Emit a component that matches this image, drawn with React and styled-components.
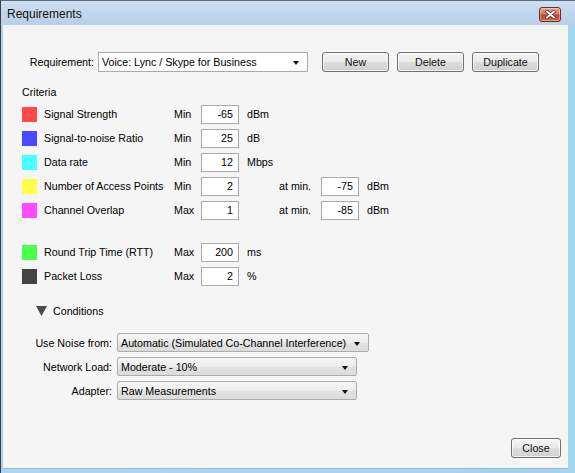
import React from 'react'
import styled, { createGlobalStyle } from 'styled-components'

const GlobalStyle = createGlobalStyle`
 html, body {
  margin: 0;
  padding: 0;
  background: #ffffff;
 }
 body {
  font-family: 'Liberation Sans', Arial, sans-serif;
  font-size: 10.7px;
  color: #000;
 }
`

const Frame = styled.div`
 width: 575px;
 height: 473px;
 box-sizing: border-box;
 display: flex;
 flex-direction: column;
 border-left: 1px solid #3a3f46;
 border-top: 1px solid #5a6b80;
 background: linear-gradient(to right, #b9d2ec 0%, #b2cde9 96%, #9fd8ef 100%);
 overflow: hidden;
`

const TitleBar = styled.div`
 height: 24px;
 flex: none;
 display: flex;
 align-items: center;
 justify-content: space-between;
 padding: 0 14px 0 6px;
 background: linear-gradient(to bottom, #cfe0f2 0%, #c2d7ee 45%, #b7cfea 100%);
`

const Title = styled.div`
 font-size: 12px;
 color: #111;
 padding-top: 2px;
`

const CloseBox = styled.div`
 width: 22px;
 height: 15px;
 margin-top: 3px;
 box-sizing: border-box;
 border: 1px solid #6b2b22;
 border-radius: 3px;
 display: flex;
 align-items: center;
 justify-content: center;
 background: linear-gradient(to bottom, #e8a493 0%, #d6775f 45%, #c3452b 55%, #cf6a4c 100%);
 box-shadow: inset 0 0 0 1px rgba(255, 255, 255, 0.35);
`

const Body = styled.div`
 flex: 1;
 display: flex;
 flex-direction: column;
 margin: 0 7px 4px 2px;
 padding-top: 27px;
 background: #f5f5f5;
 border-bottom: 1px solid #7fc6e4;
`

const RequirementRow = styled.div`
 display: flex;
 align-items: center;
 height: 20px;
`

const FieldLabel = styled.div`
 width: ${(p) => p.width}px;
 text-align: right;
 margin-right: ${(p) => p.gap}px;
 flex: none;
 white-space: nowrap;
`

const Combo = styled.div`
 position: relative;
 width: ${(p) => p.width}px;
 height: ${(p) => p.height}px;
 box-sizing: border-box;
 flex: none;
 padding-left: 3px;
 display: flex;
 align-items: center;
 border: 1px solid ${(p) => (p.flat ? '#a9a9a9' : '#acacac')};
 border-radius: ${(p) => (p.flat ? 0 : 2)}px;
 background: ${(p) =>
  p.flat ? '#ffffff' : 'linear-gradient(to bottom, #f6f6f6 0%, #ececec 50%, #e1e1e1 51%, #dcdcdc 100%)'};
 white-space: nowrap;

 &::after {
  content: '';
  position: absolute;
  right: 8px;
  top: 50%;
  margin-top: -1px;
  border-left: 3.5px solid transparent;
  border-right: 3.5px solid transparent;
  border-top: 4px solid #111;
 }
`

const ButtonGroup = styled.div`
 display: flex;
 gap: 8px;
 margin-left: 14px;
`

const Button = styled.div`
 width: ${(p) => p.width || 67}px;
 height: 20px;
 box-sizing: border-box;
 display: flex;
 align-items: center;
 justify-content: center;
 border: 1px solid #707070;
 border-radius: 3px;
 background: linear-gradient(to bottom, #f4f4f4 0%, #ebebeb 48%, #dddddd 52%, #cfcfcf 100%);
 box-shadow: inset 0 0 0 1px rgba(255, 255, 255, 0.7);
 color: #111;
`

const SectionTitle = styled.div`
 margin: 12px 0 0 19px;
 height: 16px;
 line-height: 16px;
`

const CriteriaList = styled.div`
 display: flex;
 flex-direction: column;
 margin-top: 2px;
 padding-left: 19px;
`

const CriteriaRow = styled.div`
 display: flex;
 align-items: center;
 height: 24px;
 margin-top: ${(p) => (p.spaced ? 18 : 0)}px;
`

const Swatch = styled.div`
 width: 15px;
 height: 15px;
 flex: none;
 background: ${(p) => p.color};
 margin-right: 7px;
`

const CriteriaName = styled.div`
 width: 130px;
 flex: none;
 white-space: nowrap;
`

const Mode = styled.div`
 width: 27px;
 flex: none;
`

const ValueBox = styled.div`
 width: 38px;
 height: 19px;
 box-sizing: border-box;
 flex: none;
 border: 1px solid #a9a9a9;
 background: #fff;
 display: flex;
 align-items: center;
 justify-content: flex-end;
 padding-right: 5px;
`

const Unit = styled.div`
 width: ${(p) => p.width || 32}px;
 padding-left: 8px;
 flex: none;
`

const AtMin = styled.div`
 width: 42px;
 flex: none;
`

const ConditionsHeader = styled.div`
 display: flex;
 align-items: center;
 height: 20px;
 margin: 13px 0 0 33px;
 gap: 6px;
`

const ConditionsList = styled.div`
 display: flex;
 flex-direction: column;
 gap: 5px;
 margin-top: 12px;
`

const ConditionRow = styled.div`
 display: flex;
 align-items: center;
 height: 19px;
`

const Footer = styled.div`
 margin-top: auto;
 display: flex;
 justify-content: flex-end;
 padding: 0 7px 10px 0;
`

const criteria = [
 { color: '#ff4a4a', name: 'Signal Strength', mode: 'Min', value: '-65', unit: 'dBm' },
 { color: '#4a4aff', name: 'Signal-to-noise Ratio', mode: 'Min', value: '25', unit: 'dB' },
 { color: '#4affff', name: 'Data rate', mode: 'Min', value: '12', unit: 'Mbps' },
 { color: '#ffff4a', name: 'Number of Access Points', mode: 'Min', value: '2', atMin: '-75', unit2: 'dBm' },
 { color: '#ff4aff', name: 'Channel Overlap', mode: 'Max', value: '1', atMin: '-85', unit2: 'dBm' },
 { color: '#4aff4a', name: 'Round Trip Time (RTT)', mode: 'Max', value: '200', unit: 'ms', spaced: true },
 { color: '#444444', name: 'Packet Loss', mode: 'Max', value: '2', unit: '%' },
]

const conditions = [
 { label: 'Use Noise from:', value: 'Automatic (Simulated Co-Channel Interference)', width: 252 },
 { label: 'Network Load:', value: 'Moderate - 10%', width: 240 },
 { label: 'Adapter:', value: 'Raw Measurements', width: 240 },
]

export default function App() {
 return (
  <>
   <GlobalStyle />
   <Frame>
    <TitleBar>
     <Title>Requirements</Title>
     <CloseBox>
      <svg width="11" height="9" viewBox="0 0 11 9">
       <path d="M2 1.5 L9 7.5 M9 1.5 L2 7.5" stroke="#5a1e16" strokeWidth="3.4" strokeLinecap="round" />
       <path d="M2 1.5 L9 7.5 M9 1.5 L2 7.5" stroke="#ffffff" strokeWidth="2" strokeLinecap="round" />
      </svg>
     </CloseBox>
    </TitleBar>
    <Body>
     <RequirementRow>
      <FieldLabel width={91} gap={4}>Requirement:</FieldLabel>
      <Combo flat width={210} height={20}>Voice: Lync / Skype for Business</Combo>
      <ButtonGroup>
       <Button>New</Button>
       <Button>Delete</Button>
       <Button>Duplicate</Button>
      </ButtonGroup>
     </RequirementRow>

     <SectionTitle>Criteria</SectionTitle>
     <CriteriaList>
      {criteria.map((c) => (
       <CriteriaRow key={c.name} spaced={c.spaced}>
        <Swatch color={c.color} />
        <CriteriaName>{c.name}</CriteriaName>
        <Mode>{c.mode}</Mode>
        <ValueBox>{c.value}</ValueBox>
        <Unit>{c.unit}</Unit>
        {c.atMin && (
         <>
          <AtMin>at min.</AtMin>
          <ValueBox>{c.atMin}</ValueBox>
          <Unit>{c.unit2}</Unit>
         </>
        )}
       </CriteriaRow>
      ))}
     </CriteriaList>

     <ConditionsHeader>
      <svg width="11" height="10" viewBox="0 0 11 10">
       <path d="M0 0 H11 L5.5 10 Z" fill="#4a4a4a" />
      </svg>
      <span>Conditions</span>
     </ConditionsHeader>
     <ConditionsList>
      {conditions.map((c) => (
       <ConditionRow key={c.label}>
        <FieldLabel width={109} gap={5}>{c.label}</FieldLabel>
        <Combo width={c.width} height={19}>{c.value}</Combo>
       </ConditionRow>
      ))}
     </ConditionsList>

     <Footer>
      <Button width={50}>Close</Button>
     </Footer>
    </Body>
   </Frame>
  </>
 )
}
